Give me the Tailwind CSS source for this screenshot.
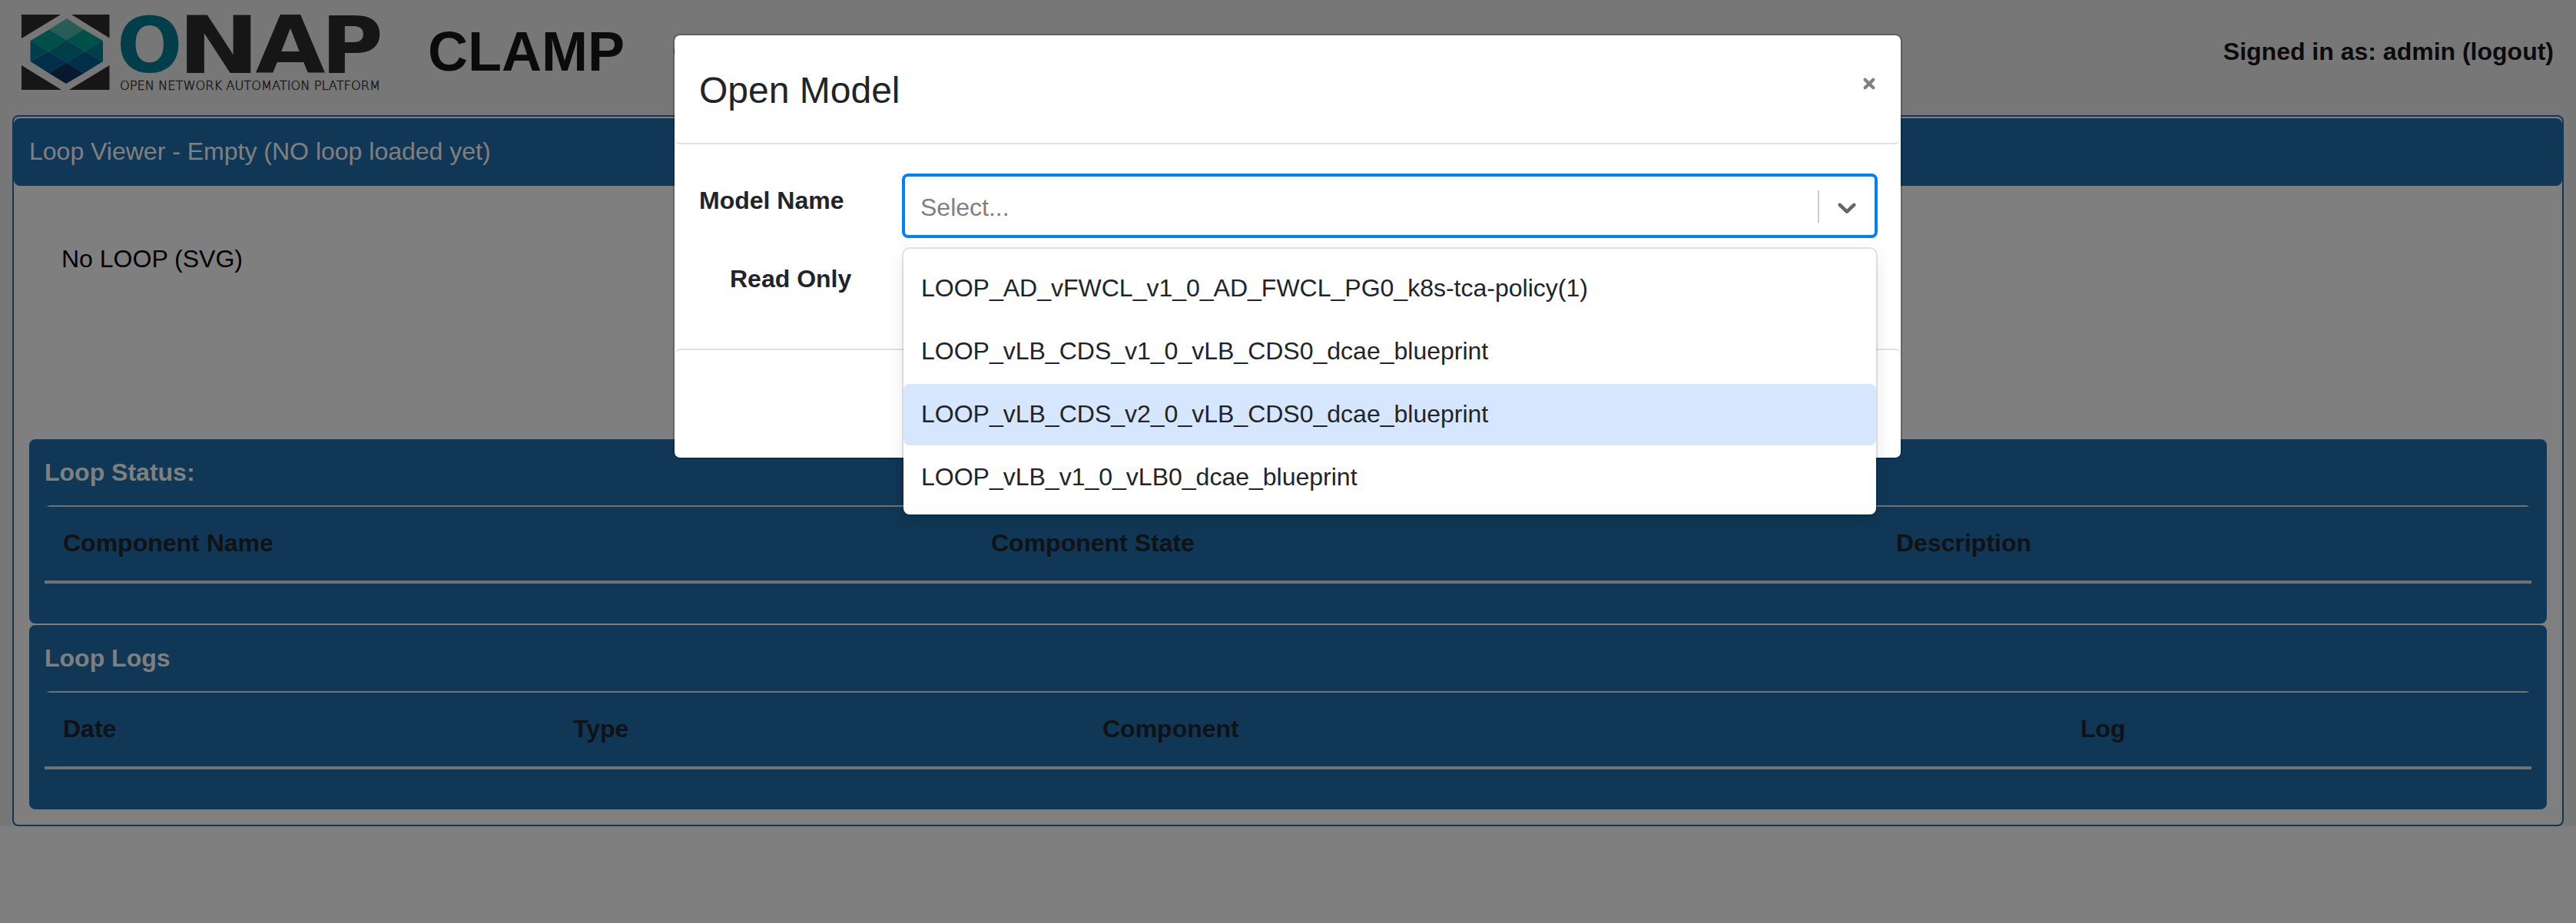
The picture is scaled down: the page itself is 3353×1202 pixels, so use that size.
<!DOCTYPE html>
<html lang="en">
<head>
<meta charset="utf-8">
<title>CLAMP</title>
<script src="https://cdn.jsdelivr.net/npm/@tailwindcss/browser@4"></script>
</head>
<body class="relative h-[1202px] w-[3353px] overflow-hidden bg-white font-['Liberation_Sans',Arial,sans-serif] text-[32px] leading-[48px] text-[#212529]">
<div class="h-[1076px] bg-[#eee] px-4">
  <header class="flex h-[150px] items-start">
    <svg class="ml-3 mt-[18px] h-[102px] w-[472px] shrink-0 overflow-visible" viewBox="28 18 472 102">
      <g fill="#2c2c2c">
        <path d="M28 19H79L28 50z"/><path d="M93 19H142.500V49.500z"/><path d="M28 85L80 117H28z"/><path d="M142.500 85V117H90z"/>
      </g>
      <path fill="#50b8b0" d="M87 24L109 38.500L86.700 52L64 38.500z"/>
      <path fill="#00a094" d="M64 38.500L86.700 52L63.500 67L39.500 53zM109 38.500L134 53L110 67L86.700 52z"/>
      <path fill="#007e92" d="M39.500 53L63.500 67L39.500 80zM134 53L110 67L134 80zM86.700 52L110 67L86.500 81.500L63.500 67z"/>
      <path fill="#005e94" d="M63.500 67L86.500 81.500L64 95.500L39.500 80zM110 67L134 80L109 95.500L86.500 81.500z"/>
      <path fill="#10325e" d="M86.500 81.500L109 95.500L86 109L64 95.500z"/>
      <g class="font-['DejaVu_Sans',sans-serif] font-bold" font-size="103" fill="#2c2c2c">
        <text transform="translate(152 94) scale(.975 .97)" fill="#007e92">O</text>
        <text transform="translate(231.400 95) scale(1.235 1)">N</text>
        <text transform="translate(332.500 95) scale(1.140 1)">A</text>
        <text transform="translate(418 95) scale(1.070 1)">P</text>
      </g>
      <text x="156" y="116.500" font-size="15" fill="#2c2c2c" stroke="#2c2c2c" stroke-width=".4" textLength="339" lengthAdjust="spacingAndGlyphs" class="font-['DejaVu_Sans',sans-serif] font-extralight">OPEN NETWORK AUTOMATION PLATFORM</text>
    </svg>
    <div class="ml-[57px] mt-[13px] w-[319px] text-[72px] leading-[108px] font-bold text-[#171717]">CLAMP</div>
    <div class="mt-[43px] flex-1 font-bold text-[#171717]">C</div>
    <div class="mr-[13px] mt-[43px] font-bold text-[#171717]">Signed in as: admin (logout)</div>
  </header>
  <main class="h-[926px] rounded-[8px] border-2 border-[#206eaa] bg-white pt-[2px]">
    <div class="h-[88px] rounded-[8px] bg-[#206eaa] px-5 pt-[19px] text-white">Loop Viewer - Empty (NO loop loaded yet)</div>
    <div class="h-[330px] pl-[62px] pt-[71px] text-black">No LOOP (SVG)</div>
    <div class="flex flex-col gap-[2px] px-5">
      <section class="h-[240px] rounded-[8px] bg-[#206eaa] px-5 pt-[19px]">
        <h2 class="h-[67px] font-bold text-white">Loop Status:</h2>
        <div class="h-[2px] overflow-hidden"><div class="h-5 rounded-[8px] border-t-2 border-[#dee2e6]"></div></div>
        <div class="flex h-24 px-6 pt-[23px] font-bold"><div class="w-[1208px]">Component Name</div><div class="w-[1178px]">Component State</div><div>Description</div></div>
        <div class="h-1 bg-[#dee2e6]"></div>
      </section>
      <section class="h-[240px] rounded-[8px] bg-[#206eaa] px-5 pt-[19px]">
        <h2 class="h-[67px] font-bold text-white">Loop Logs</h2>
        <div class="h-[2px] overflow-hidden"><div class="h-5 rounded-[8px] border-t-2 border-[#dee2e6]"></div></div>
        <div class="flex h-24 px-6 pt-[23px] font-bold"><div class="w-[664px]">Date</div><div class="w-[689px]">Type</div><div class="w-[1273px]">Component</div><div>Log</div></div>
        <div class="h-1 bg-[#dee2e6]"></div>
      </section>
    </div>
  </main>
</div>

<div class="absolute inset-0 bg-black/50"></div>

<div class="absolute left-[876px] top-[44px] flex h-[554px] w-[1600px] flex-col rounded-[9px] border-2 border-black/20 bg-white bg-clip-padding">
  <div class="flex h-[142px] items-center justify-between rounded-[8px] border-b-2 border-[#dee2e6] pl-8 pr-[33px]">
    <div class="mt-[3px] text-[48px] leading-[72px]">Open Model</div>
    <svg class="mb-[14px] size-4" viewBox="0 0 16 16" fill="none" stroke="#808080" stroke-width="4.200" stroke-linecap="round"><path d="M2.700 2.700L13.300 13.300M13.300 2.700L2.700 13.300"/></svg>
  </div>
  <div class="flex h-[266px] pl-8 pr-[30px] pt-[38px]">
    <div class="w-[264px] font-bold">
      <div class="mt-[11px]">Model Name</div>
      <div class="ml-10 mt-[54px]">Read Only</div>
    </div>
    <div class="relative h-[84px] flex-1">
      <div class="flex h-full items-center rounded-[8px] border-4 border-[#0080ff] pl-5">
        <div class="mt-[3px] flex-1 text-[#808080]">Select...</div>
        <div class="mt-[2px] h-[42px] w-[2px] bg-[#ccc]"></div>
        <svg class="ml-4 mr-4 mt-1 size-10" viewBox="0 0 20 20" fill="#666"><path d="M4.516 7.548c0.436-0.446 1.043-0.481 1.576 0l3.908 3.747 3.908-3.747c0.533-0.481 1.141-0.446 1.574 0 0.436 0.445 0.408 1.197 0 1.615-0.406 0.418-4.695 4.502-4.695 4.502-0.217 0.223-0.502 0.335-0.787 0.335s-0.570-0.112-0.789-0.335c0 0-4.287-4.084-4.695-4.502s-0.436-1.170 0-1.615z"/></svg>
      </div>
      <div class="absolute left-[2px] top-[98px] z-10 flex h-[346px] w-[1266px] flex-col gap-[2px] rounded-[8px] bg-white pt-3 shadow-[0_0_0_2px_rgba(0,0,0,0.1),0_8px_22px_rgba(0,0,0,0.1)]">
        <div class="flex h-20 items-center rounded-[8px] px-[23px] pb-[2px]">LOOP_AD_vFWCL_v1_0_AD_FWCL_PG0_k8s-tca-policy(1)</div>
        <div class="flex h-20 items-center rounded-[8px] px-[23px] pb-[2px]">LOOP_vLB_CDS_v1_0_vLB_CDS0_dcae_blueprint</div>
        <div class="flex h-20 items-center rounded-[8px] bg-[#d6e6ff] px-[23px] pb-[2px]">LOOP_vLB_CDS_v2_0_vLB_CDS0_dcae_blueprint</div>
        <div class="flex h-20 items-center rounded-[8px] px-[23px] pb-[2px]">LOOP_vLB_v1_0_vLB0_dcae_blueprint</div>
      </div>
    </div>
  </div>
  <div class="flex-1 rounded-[8px] border-t-2 border-[#dee2e6]"></div>
</div>
</body>
</html>
